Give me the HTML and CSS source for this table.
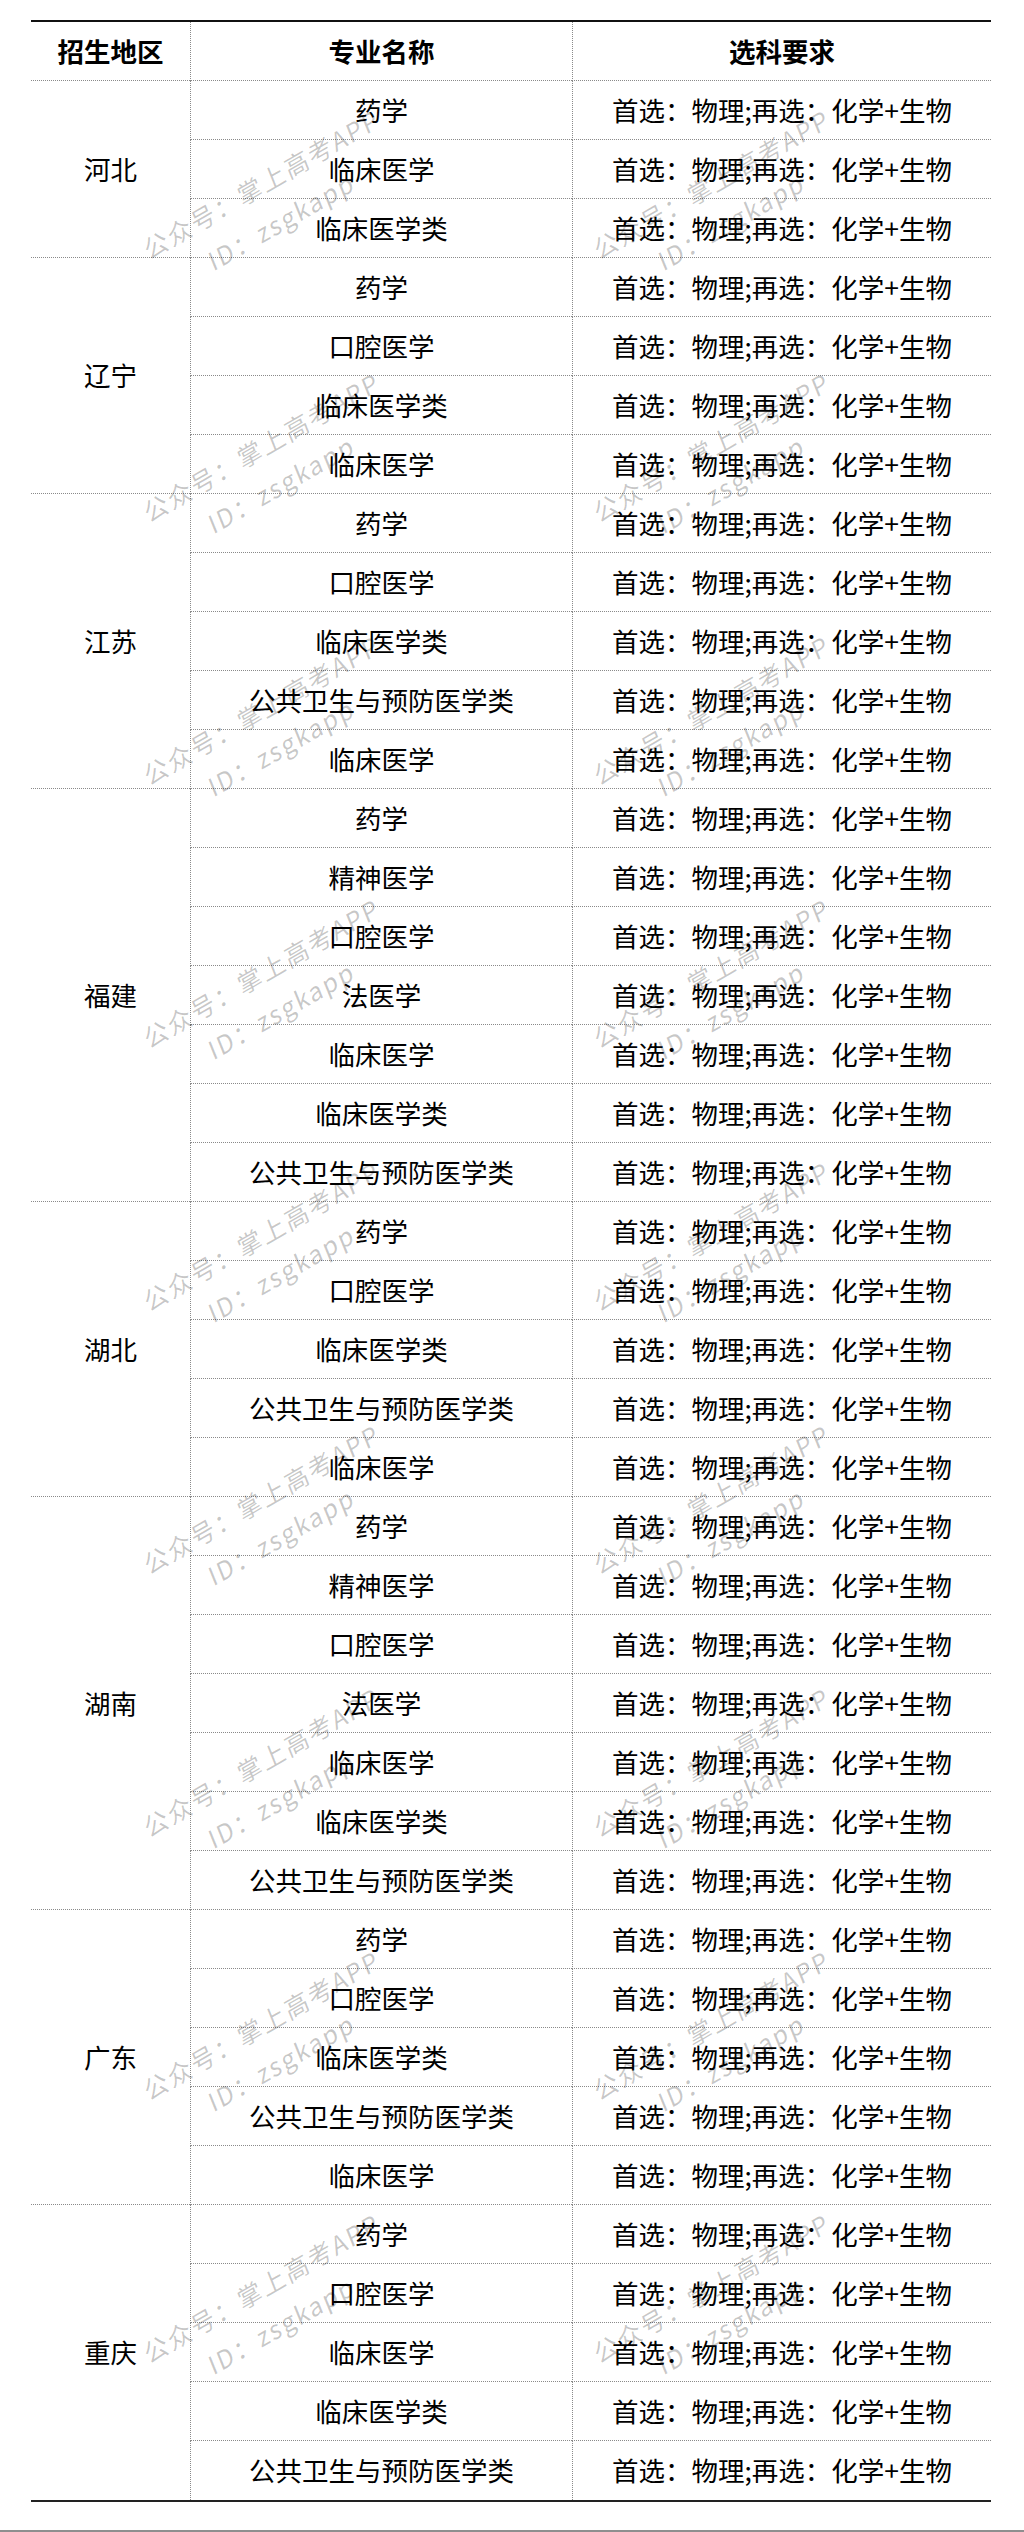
FILE: index.html
```html
<!DOCTYPE html>
<html lang="zh-CN">
<head>
<meta charset="utf-8">
<title>选科要求</title>
<link rel="stylesheet" href="styles.css">
</head>
<body>
<div class="page">
  <table class="sheet">
    <colgroup>
      <col class="c-region">
      <col class="c-major">
      <col class="c-req">
    </colgroup>
    <thead>
      <tr><th class="region">招生地区</th><th class="major">专业名称</th><th class="req">选科要求</th></tr>
    </thead>
    <tbody>
      <tr><td class="region" rowspan="3">河北</td><td class="major">药学</td><td class="req">首选：物理;再选：化学+生物</td></tr>
      <tr><td class="major">临床医学</td><td class="req">首选：物理;再选：化学+生物</td></tr>
      <tr><td class="major">临床医学类</td><td class="req">首选：物理;再选：化学+生物</td></tr>
    </tbody>
    <tbody>
      <tr><td class="region" rowspan="4">辽宁</td><td class="major">药学</td><td class="req">首选：物理;再选：化学+生物</td></tr>
      <tr><td class="major">口腔医学</td><td class="req">首选：物理;再选：化学+生物</td></tr>
      <tr><td class="major">临床医学类</td><td class="req">首选：物理;再选：化学+生物</td></tr>
      <tr><td class="major">临床医学</td><td class="req">首选：物理;再选：化学+生物</td></tr>
    </tbody>
    <tbody>
      <tr><td class="region" rowspan="5">江苏</td><td class="major">药学</td><td class="req">首选：物理;再选：化学+生物</td></tr>
      <tr><td class="major">口腔医学</td><td class="req">首选：物理;再选：化学+生物</td></tr>
      <tr><td class="major">临床医学类</td><td class="req">首选：物理;再选：化学+生物</td></tr>
      <tr><td class="major">公共卫生与预防医学类</td><td class="req">首选：物理;再选：化学+生物</td></tr>
      <tr><td class="major">临床医学</td><td class="req">首选：物理;再选：化学+生物</td></tr>
    </tbody>
    <tbody>
      <tr><td class="region" rowspan="7">福建</td><td class="major">药学</td><td class="req">首选：物理;再选：化学+生物</td></tr>
      <tr><td class="major">精神医学</td><td class="req">首选：物理;再选：化学+生物</td></tr>
      <tr><td class="major">口腔医学</td><td class="req">首选：物理;再选：化学+生物</td></tr>
      <tr><td class="major">法医学</td><td class="req">首选：物理;再选：化学+生物</td></tr>
      <tr><td class="major">临床医学</td><td class="req">首选：物理;再选：化学+生物</td></tr>
      <tr><td class="major">临床医学类</td><td class="req">首选：物理;再选：化学+生物</td></tr>
      <tr><td class="major">公共卫生与预防医学类</td><td class="req">首选：物理;再选：化学+生物</td></tr>
    </tbody>
    <tbody>
      <tr><td class="region" rowspan="5">湖北</td><td class="major">药学</td><td class="req">首选：物理;再选：化学+生物</td></tr>
      <tr><td class="major">口腔医学</td><td class="req">首选：物理;再选：化学+生物</td></tr>
      <tr><td class="major">临床医学类</td><td class="req">首选：物理;再选：化学+生物</td></tr>
      <tr><td class="major">公共卫生与预防医学类</td><td class="req">首选：物理;再选：化学+生物</td></tr>
      <tr><td class="major">临床医学</td><td class="req">首选：物理;再选：化学+生物</td></tr>
    </tbody>
    <tbody>
      <tr><td class="region" rowspan="7">湖南</td><td class="major">药学</td><td class="req">首选：物理;再选：化学+生物</td></tr>
      <tr><td class="major">精神医学</td><td class="req">首选：物理;再选：化学+生物</td></tr>
      <tr><td class="major">口腔医学</td><td class="req">首选：物理;再选：化学+生物</td></tr>
      <tr><td class="major">法医学</td><td class="req">首选：物理;再选：化学+生物</td></tr>
      <tr><td class="major">临床医学</td><td class="req">首选：物理;再选：化学+生物</td></tr>
      <tr><td class="major">临床医学类</td><td class="req">首选：物理;再选：化学+生物</td></tr>
      <tr><td class="major">公共卫生与预防医学类</td><td class="req">首选：物理;再选：化学+生物</td></tr>
    </tbody>
    <tbody>
      <tr><td class="region" rowspan="5">广东</td><td class="major">药学</td><td class="req">首选：物理;再选：化学+生物</td></tr>
      <tr><td class="major">口腔医学</td><td class="req">首选：物理;再选：化学+生物</td></tr>
      <tr><td class="major">临床医学类</td><td class="req">首选：物理;再选：化学+生物</td></tr>
      <tr><td class="major">公共卫生与预防医学类</td><td class="req">首选：物理;再选：化学+生物</td></tr>
      <tr><td class="major">临床医学</td><td class="req">首选：物理;再选：化学+生物</td></tr>
    </tbody>
    <tbody>
      <tr><td class="region" rowspan="5">重庆</td><td class="major">药学</td><td class="req">首选：物理;再选：化学+生物</td></tr>
      <tr><td class="major">口腔医学</td><td class="req">首选：物理;再选：化学+生物</td></tr>
      <tr><td class="major">临床医学</td><td class="req">首选：物理;再选：化学+生物</td></tr>
      <tr><td class="major">临床医学类</td><td class="req">首选：物理;再选：化学+生物</td></tr>
      <tr><td class="major">公共卫生与预防医学类</td><td class="req">首选：物理;再选：化学+生物</td></tr>
    </tbody>
  </table>

  <div class="wm-layer" aria-hidden="true">
    <div class="wm"><div>公众号：掌上高考APP</div><div class="wm-id">ID：zsgkapp</div></div>
    <div class="wm"><div>公众号：掌上高考APP</div><div class="wm-id">ID：zsgkapp</div></div>
    <div class="wm"><div>公众号：掌上高考APP</div><div class="wm-id">ID：zsgkapp</div></div>
    <div class="wm"><div>公众号：掌上高考APP</div><div class="wm-id">ID：zsgkapp</div></div>
    <div class="wm"><div>公众号：掌上高考APP</div><div class="wm-id">ID：zsgkapp</div></div>
    <div class="wm"><div>公众号：掌上高考APP</div><div class="wm-id">ID：zsgkapp</div></div>
    <div class="wm"><div>公众号：掌上高考APP</div><div class="wm-id">ID：zsgkapp</div></div>
    <div class="wm"><div>公众号：掌上高考APP</div><div class="wm-id">ID：zsgkapp</div></div>
    <div class="wm"><div>公众号：掌上高考APP</div><div class="wm-id">ID：zsgkapp</div></div>
    <div class="wm"><div>公众号：掌上高考APP</div><div class="wm-id">ID：zsgkapp</div></div>
    <div class="wm"><div>公众号：掌上高考APP</div><div class="wm-id">ID：zsgkapp</div></div>
    <div class="wm"><div>公众号：掌上高考APP</div><div class="wm-id">ID：zsgkapp</div></div>
    <div class="wm"><div>公众号：掌上高考APP</div><div class="wm-id">ID：zsgkapp</div></div>
    <div class="wm"><div>公众号：掌上高考APP</div><div class="wm-id">ID：zsgkapp</div></div>
    <div class="wm"><div>公众号：掌上高考APP</div><div class="wm-id">ID：zsgkapp</div></div>
    <div class="wm"><div>公众号：掌上高考APP</div><div class="wm-id">ID：zsgkapp</div></div>
    <div class="wm"><div>公众号：掌上高考APP</div><div class="wm-id">ID：zsgkapp</div></div>
    <div class="wm"><div>公众号：掌上高考APP</div><div class="wm-id">ID：zsgkapp</div></div>
  </div>

  <div class="bottom-bar"></div>
</div>
</body>
</html>
```

FILE: styles.css
```css
html, body {
  margin: 0;
  padding: 0;
  background: #ffffff;
}

.page {
  position: relative;
  min-height: 2532px;
  box-sizing: border-box;
  padding: 20px 0 0 31px;
  display: flex;
  flex-direction: column;
  align-items: flex-start;
  font-family: "Noto Sans CJK SC", "Noto Sans", sans-serif;
  color: #000;
  overflow: hidden;
}

.sheet {
  width: 960px;
  table-layout: fixed;
  border-collapse: separate;
  border-spacing: 0;
  border-top: 2px solid #111;
  border-bottom: 2px solid #222;
  font-size: 26.5px;
  line-height: 1;
}

.c-region { width: 159px; }
.c-major { width: 382px; }
.c-req { width: 419px; }

.sheet tr {
  height: 59px;
}

.sheet th,
.sheet td {
  padding: 0;
  text-align: center;
  vertical-align: middle;
  white-space: nowrap;
  border-bottom: 1px dotted #8a8a8a;
}

.sheet th {
  font-weight: 700;
}

.sheet td {
  font-weight: 400;
}

.sheet .major,
.sheet .req {
  border-left: 1px dotted #8a8a8a;
}

.sheet tbody:last-child tr:last-child td,
.sheet tbody:last-child td.region {
  border-bottom: 0;
}

/* watermark overlay */
.wm-layer {
  position: absolute;
  left: 143px;
  top: 223px;
  display: grid;
  grid-template-columns: 450px 450px;
  grid-auto-rows: 263px;
  pointer-events: none;
}

.wm {
  font-family: "Noto Sans CJK SC", "Noto Sans", sans-serif;
  font-size: 25px;
  line-height: 42px;
  letter-spacing: 2px;
  color: rgba(0, 0, 0, 0.22);
  white-space: nowrap;
  transform-origin: 12.5px 21px;
  transform: rotate(-30deg) skewX(-8deg);
}

.wm-id {
  padding-left: 56px;
}

.bottom-bar {
  margin-top: auto;
  margin-left: -31px;
  width: 1024px;
  height: 2px;
  background: #8f8f8f;
}
```
